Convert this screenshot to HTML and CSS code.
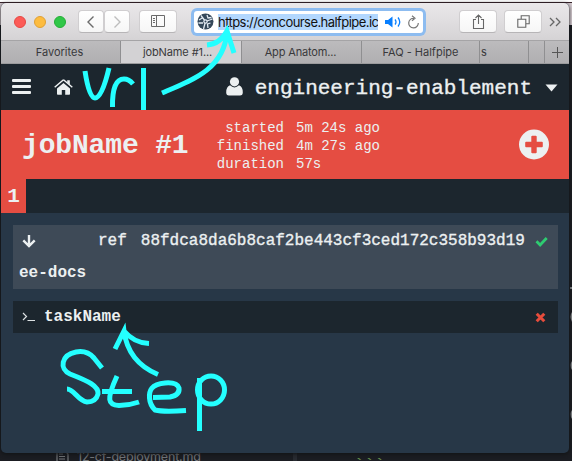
FILE: index.html
```html
<!DOCTYPE html>
<html lang="en">
<head>
<meta charset="utf-8">
<title>jobName #1</title>
<link rel="stylesheet" href="styles.css">
</head>
<body>
<div class="desktop">
  <div class="editor-file">
    <svg width="13" height="14" viewBox="0 0 13 14" fill="none" stroke="#74777b" stroke-width="1.2"><path d="M1 13V1h7l4 4v8zM3 5h4M3 7.500h6M3 10h6"/></svg>
    <span>12-cf-deployment.md</span>
  </div>
  <div class="editor-split"></div>
  <div class="editor-code">```</div>
  <svg class="editor-edge" width="3" height="150" viewBox="0 0 3 150" fill="#85888b"><path d="M1 0h2v2H1zM3 25q-3 4 0 10zM3 74q-3 4 0 9zM3 123q-3 4 0 9z"/></svg>
  <main class="window">
    <div class="toolbar">
      <div class="lights"><i class="light red"></i><i class="light amber"></i><i class="light green"></i></div>
      <div class="nav">
        <span class="btn nav-btn"><svg width="10" height="14" viewBox="0 0 10 14"><path d="M7.500 1.500 2 7l5.500 5.500" fill="none" stroke="#6b6b6b" stroke-width="1.400"/></svg></span>
        <span class="btn nav-btn"><svg width="10" height="14" viewBox="0 0 10 14"><path d="M2.500 1.500 8 7l-5.500 5.500" fill="none" stroke="#bdbdbd" stroke-width="1.400"/></svg></span>
      </div>
      <span class="btn side-btn"><svg width="16" height="13" viewBox="0 0 16 13" fill="none" stroke="#6b6b6b"><path d="M1.500 .5h13v11h-13zM6.500 .5v11M3 3.500h2M3 5.500h2M3 7.500h2"/></svg></span>
      <div class="address">
        <svg class="site" width="17" height="17" viewBox="0 0 17 17"><circle cx="8.500" cy="8.500" r="8" fill="#34485a"/><g fill="none" stroke="#e3ebf3" stroke-width="1.300"><path d="M8.500 8.500 4 2.500M8.500 8.500 15.500 6M8.500 8.500l-2 7.500M2 7l4-2.500M1.500 10l4.500 0M10 2l1 3 3.500-.5M13.500 10l-3 1 .5 4"/></g><circle cx="8.500" cy="8.500" r="2.200" fill="#e3ebf3"/><circle cx="8.500" cy="8.500" r="1" fill="#34485a"/></svg>
        <span class="url">https://concourse.halfpipe.ic</span>
        <svg class="sound" width="18" height="14" viewBox="0 0 18 14"><path d="M1 5h3l4.500-3.500v11L4 9H1z" fill="#087fff"/><path d="M11 4.500q2 2.500 0 5M14 2.500q3.500 4.500 0 9" fill="none" stroke="#087fff" stroke-width="1.300"/></svg>
        <svg width="13" height="14" viewBox="0 0 13 14" fill="none" stroke="#777" stroke-width="1.200"><path d="M7 3.300A4.800 4.800 0 1 0 11.300 8M5 .8l3 2.500L5 5.800"/></svg>
      </div>
      <span class="btn action"><svg width="13" height="16" viewBox="0 0 13 16" fill="none" stroke="#666" stroke-width="1.100"><path d="M4 5.500H1.500v9h10v-9H9M6.500 10V1M3.500 4l3-3 3 3"/></svg></span>
      <span class="btn action tabs-btn"><svg width="13" height="13" viewBox="0 0 13 13" fill="none" stroke="#666" stroke-width="1.100"><path d="M.8 4.200h8v8h-8zM4.200 4V.8h8v8H9"/></svg></span>
      <svg class="more" width="12" height="10" viewBox="0 0 12 10" fill="none" stroke="#666" stroke-width="1.300"><path d="m1 1 4 4-4 4M7 1l4 4-4 4"/></svg>
    </div>
    <div class="tabs">
      <span class="tab t1">Favorites</span><span class="tab t2">jobName #1...</span><span class="tab t3">App Anatom...</span><span class="tab t4">FAQ - Halfpipe</span><span class="tab t5">s</span><span class="tab t6"></span>
      <span class="tab plus"><svg width="11" height="11" viewBox="0 0 11 11"><path d="M5.500 0v11M0 5.500h11" stroke="#555" stroke-width="1"/></svg></span>
    </div>
    <header class="top">
      <svg class="burger" width="19" height="16" viewBox="0 0 19 16" fill="#ecf0f1"><rect y="0" width="19" height="3" rx="1"/><rect y="6" width="19" height="3" rx="1"/><rect y="12" width="19" height="3" rx="1"/></svg>
      <svg class="home" width="19" height="16" viewBox="0 0 19 16" fill="#ecf0f1"><path d="M9.500 4 16 9.400V15q0 .8-.8.800h-4V11H7.800v4.800h-4Q3 15.800 3 15V9.400z"/><path d="M9.500.8 18.300 8.200M.7 8.200 9.500.8" fill="none" stroke="#ecf0f1" stroke-width="1.500"/><path d="M13.200 1.200h2.600v4.500l-2.600-2.200z"/></svg>
      <svg class="user" width="17" height="19" viewBox="0 0 17 19" fill="#ecf0f1"><circle cx="8.500" cy="4.800" r="4.600"/><path d="M4 8.300Q8.500 12.500 13 8.300 16.800 9.500 16.800 15.500 16.800 18.500 14 18.500H3Q.2 18.500.2 15.500.2 9.500 4 8.300z"/></svg>
      <span class="team">engineering-enablement</span>
      <svg width="13" height="8" viewBox="0 0 13 8"><path d="M.5.500h12l-6 7z" fill="#ecf0f1"/></svg>
    </header>
    <section class="build">
      <h1>jobName #1</h1>
      <dl><dt>started</dt><dd>5m 24s ago</dd><dt>finished</dt><dd>4m 27s ago</dd><dt>duration</dt><dd>57s</dd></dl>
      <svg class="add" width="30" height="31" viewBox="0 0 30 31"><circle cx="15" cy="15.500" r="15" fill="#ecf0f1"/><g fill="#e54d42"><rect x="12.300" y="6.700" width="5.400" height="17.600" rx="1"/><rect x="6.200" y="12.800" width="17.600" height="5.400" rx="1"/></g></svg>
    </section>
    <nav class="history"><span>1</span></nav>
    <section class="steps">
      <article class="step get">
        <div class="row">
          <svg width="14" height="13" viewBox="0 0 14 13" fill="none" stroke="#ecf0f1" stroke-width="2.400"><path d="M7 0v11M1.300 5.300 7 11l5.700-5.700"/></svg>
          <span class="key">ref</span><span class="hash">88fdca8da6b8caf2be443cf3ced172c358b93d19</span>
          <svg class="status" width="13" height="11" viewBox="0 0 13 11"><path d="m1.500 5.300 3.600 3.600L11.700 2" fill="none" stroke="#2ecc71" stroke-width="2.800"/></svg>
        </div>
        <div class="name">ee-docs</div>
      </article>
      <article class="step task">
        <svg width="14" height="10" viewBox="0 0 14 10" fill="none" stroke="#dce1e3"><path d="m1 1 3.500 3.500L1 8" stroke-width="1.200"/><path d="M5.500 8.500H13" stroke-width="1.200"/></svg>
        <span class="name">taskName</span>
        <svg class="status" width="11" height="11" viewBox="0 0 11 11"><path d="m1.700 1.700 7.600 7.600M9.300 1.700 1.700 9.300" stroke="#e74c3c" stroke-width="3"/></svg>
      </article>
    </section>
  </main>
  <svg class="ink" width="572" height="461" viewBox="0 0 572 461" fill="none" stroke="#24ffff" stroke-width="5">
    <path d="M85 71Q89 98 95 98Q102 98 109 68M112.500 107Q112 79 124 79Q129 79 133 84M143.500 68V110"/>
    <path d="M162 93C193 80 224 69 227 32M207 45Q220 44 227 31L234 53"/>
    <path d="M158 374.500Q128 362 124 331L115 349M124 331Q134 343 149 343.500"/>
    <path d="M102 368L94 358Q87 350 76 352C61 355 59 369 70 374C88 381 99 386 98 394Q96 402 87 402C78 401 74 389 67 389M102 391.500H132M117 376C106 400 108 405 119 405.500Q129 405.500 139 402"/>
    <path d="M153 397.500L170 397Q180 395 179 388Q177 382 165 383C151 384 149 391 149.500 398Q150 405 155 410Q163 412 186 410.500M199.500 378V431"/><ellipse cx="211" cy="390" rx="13.500" ry="14"/>
  </svg>
</div>
</body>
</html>
```
FILE: styles.css
```css
* { box-sizing: border-box; }
body { margin: 0; }
svg { display: block; flex: none; }
.desktop {
  position: relative; width: 572px; height: 461px; overflow: hidden;
  padding: 3px 3px 8px 1px;
  background: linear-gradient(#fff 0 2px, #39242b 2px 3px, #d5cbd0 3px 25px, #1b1d22 25px);
}
.window {
  position: relative; height: 450px; border-radius: 5px; overflow: hidden;
  background: #273747; box-shadow: 0 1px 4px #101214;
  font-family: "Liberation Mono", monospace; color: #ecf0f1;
}
.toolbar {
  height: 38px; display: flex; align-items: center;
  background: linear-gradient(#eae8ea, #d5d3d5); border-bottom: 1px solid #a5a4a6;
}
.lights { display: flex; gap: 8px; margin-left: 13px; }
.light { width: 12px; height: 12px; border-radius: 50%; }
.red { background: #fc5b57; border: 1px solid #e64843; }
.amber { background: #fdbc40; border: 1px solid #e0a034; }
.green { background: #30c748; border: 1px solid #25ae36; }
.btn {
  display: flex; align-items: center; justify-content: center; height: 23px; flex: none;
  background: linear-gradient(#fff, #f6f6f6); border: 1px solid #d0ced0; border-bottom-color: #b7b5b7; border-radius: 4px;
}
.nav { display: flex; margin-left: 12px; }
.nav-btn { width: 26px; }
.side-btn { width: 38px; margin-left: 9px; }
.address {
  display: flex; align-items: center; width: 229px; height: 22px; margin-left: 17px; padding-left: 3px;
  background: #fff; border-radius: 3px; box-shadow: 0 0 0 3px #8dbcf0;
}
.url {
  width: 160px; height: 16px; margin-left: 4px; overflow: hidden; white-space: nowrap;
  background: #b2d7fe; color: #111; font: 13px/16px Inter, sans-serif; letter-spacing: -.56px;
}
.sound { margin: 0 5px 0 6px; }
.action { width: 38px; margin-left: 36px; }
.tabs-btn { margin-left: 7px; }
.more { margin-left: 7px; }
.tabs { display: flex; height: 23px; border-bottom: 1px solid #9b9b9d; }
.tab {
  display: flex; align-items: center; justify-content: center; flex: none; white-space: nowrap;
  border-right: 1px solid #8f8f91; background: linear-gradient(#bcbbbd, #b0afb1);
  font: 11px/22px Inter, sans-serif; color: #39393b;
}
.t1 { width: 120px; padding-right: 2px; }
.t2 { width: 121px; background: #d3d2d4; padding-right: 7px; letter-spacing: -.1px; }
.t3 { width: 120px; padding-right: 2px; letter-spacing: -.15px; }
.t4 { width: 118px; }
.t5 { width: 49px; justify-content: flex-start; padding-left: 1px; }
.t6 { width: 16px; }
.plus { flex: 1; border: 0; }
.top { display: flex; align-items: center; height: 46px; padding: 1px 11px 0 11px; background: #1c262e; }
.burger { margin-top: -1px; }
.home { margin: -1px 0 0 23px; }
.user { margin: -2px 0 0 auto; }
.team { margin: 2px 13px 0 12px; font-size: 21px; line-height: 24px; -webkit-text-stroke: .35px #ecf0f1; }
.build { display: flex; align-items: center; height: 69px; background: #e54d42; padding: 0 20px 0 21px; }
.build h1 { margin: 2px 0 0; width: 169px; font-size: 28px; line-height: 32px; font-weight: 700; white-space: nowrap; letter-spacing: -.15px; }
.build dl { margin: 2px 0 0 25px; display: grid; grid-template-columns: 68px auto; column-gap: 12px; font-size: 14px; line-height: 18px; }
.build dt { text-align: right; }
.build dd { margin: 0; }
.add { margin-left: auto; }
.history { height: 34px; display: flex; background: #1c262e; }
.history span { width: 25px; background: #e54d42; text-align: center; font-size: 21px; line-height: 35px; font-weight: 700; }
.steps { padding: 12px; padding-right: 11px; display: flex; flex-direction: column; gap: 12px; font-size: 16px; line-height: 33px; }
.get { height: 64px; padding: 0 10px 0 6px; background: #3e4a57; }
.row { display: flex; align-items: center; height: 32px; padding-left: 3px; }
.key { margin-left: 62px; -webkit-text-stroke: .35px #ecf0f1; }
.hash { margin-left: 14px; -webkit-text-stroke: .35px #ecf0f1; }
.name { font-weight: 700; }
.task { display: flex; align-items: center; height: 32px; padding: 0 12px 0 9px; background: #1c262e; }
.task .name { margin-left: 8px; }
.status { margin-left: auto; }
.ink { position: absolute; left: 0; top: 0; }
.editor-file { position: absolute; left: 56px; top: 449px; display: flex; gap: 8px; color: #74777b; font: 12.5px/15px Inter, sans-serif; letter-spacing: -.2px; white-space: nowrap; }
.editor-split { position: absolute; left: 293px; top: 453px; width: 4px; height: 8px; background: #282b31; }
.editor-code { position: absolute; left: 354px; top: 456px; color: #69934e; font: 17px/20px "Liberation Mono", monospace; }
.editor-edge { position: absolute; left: 569px; top: 287px; }
```
